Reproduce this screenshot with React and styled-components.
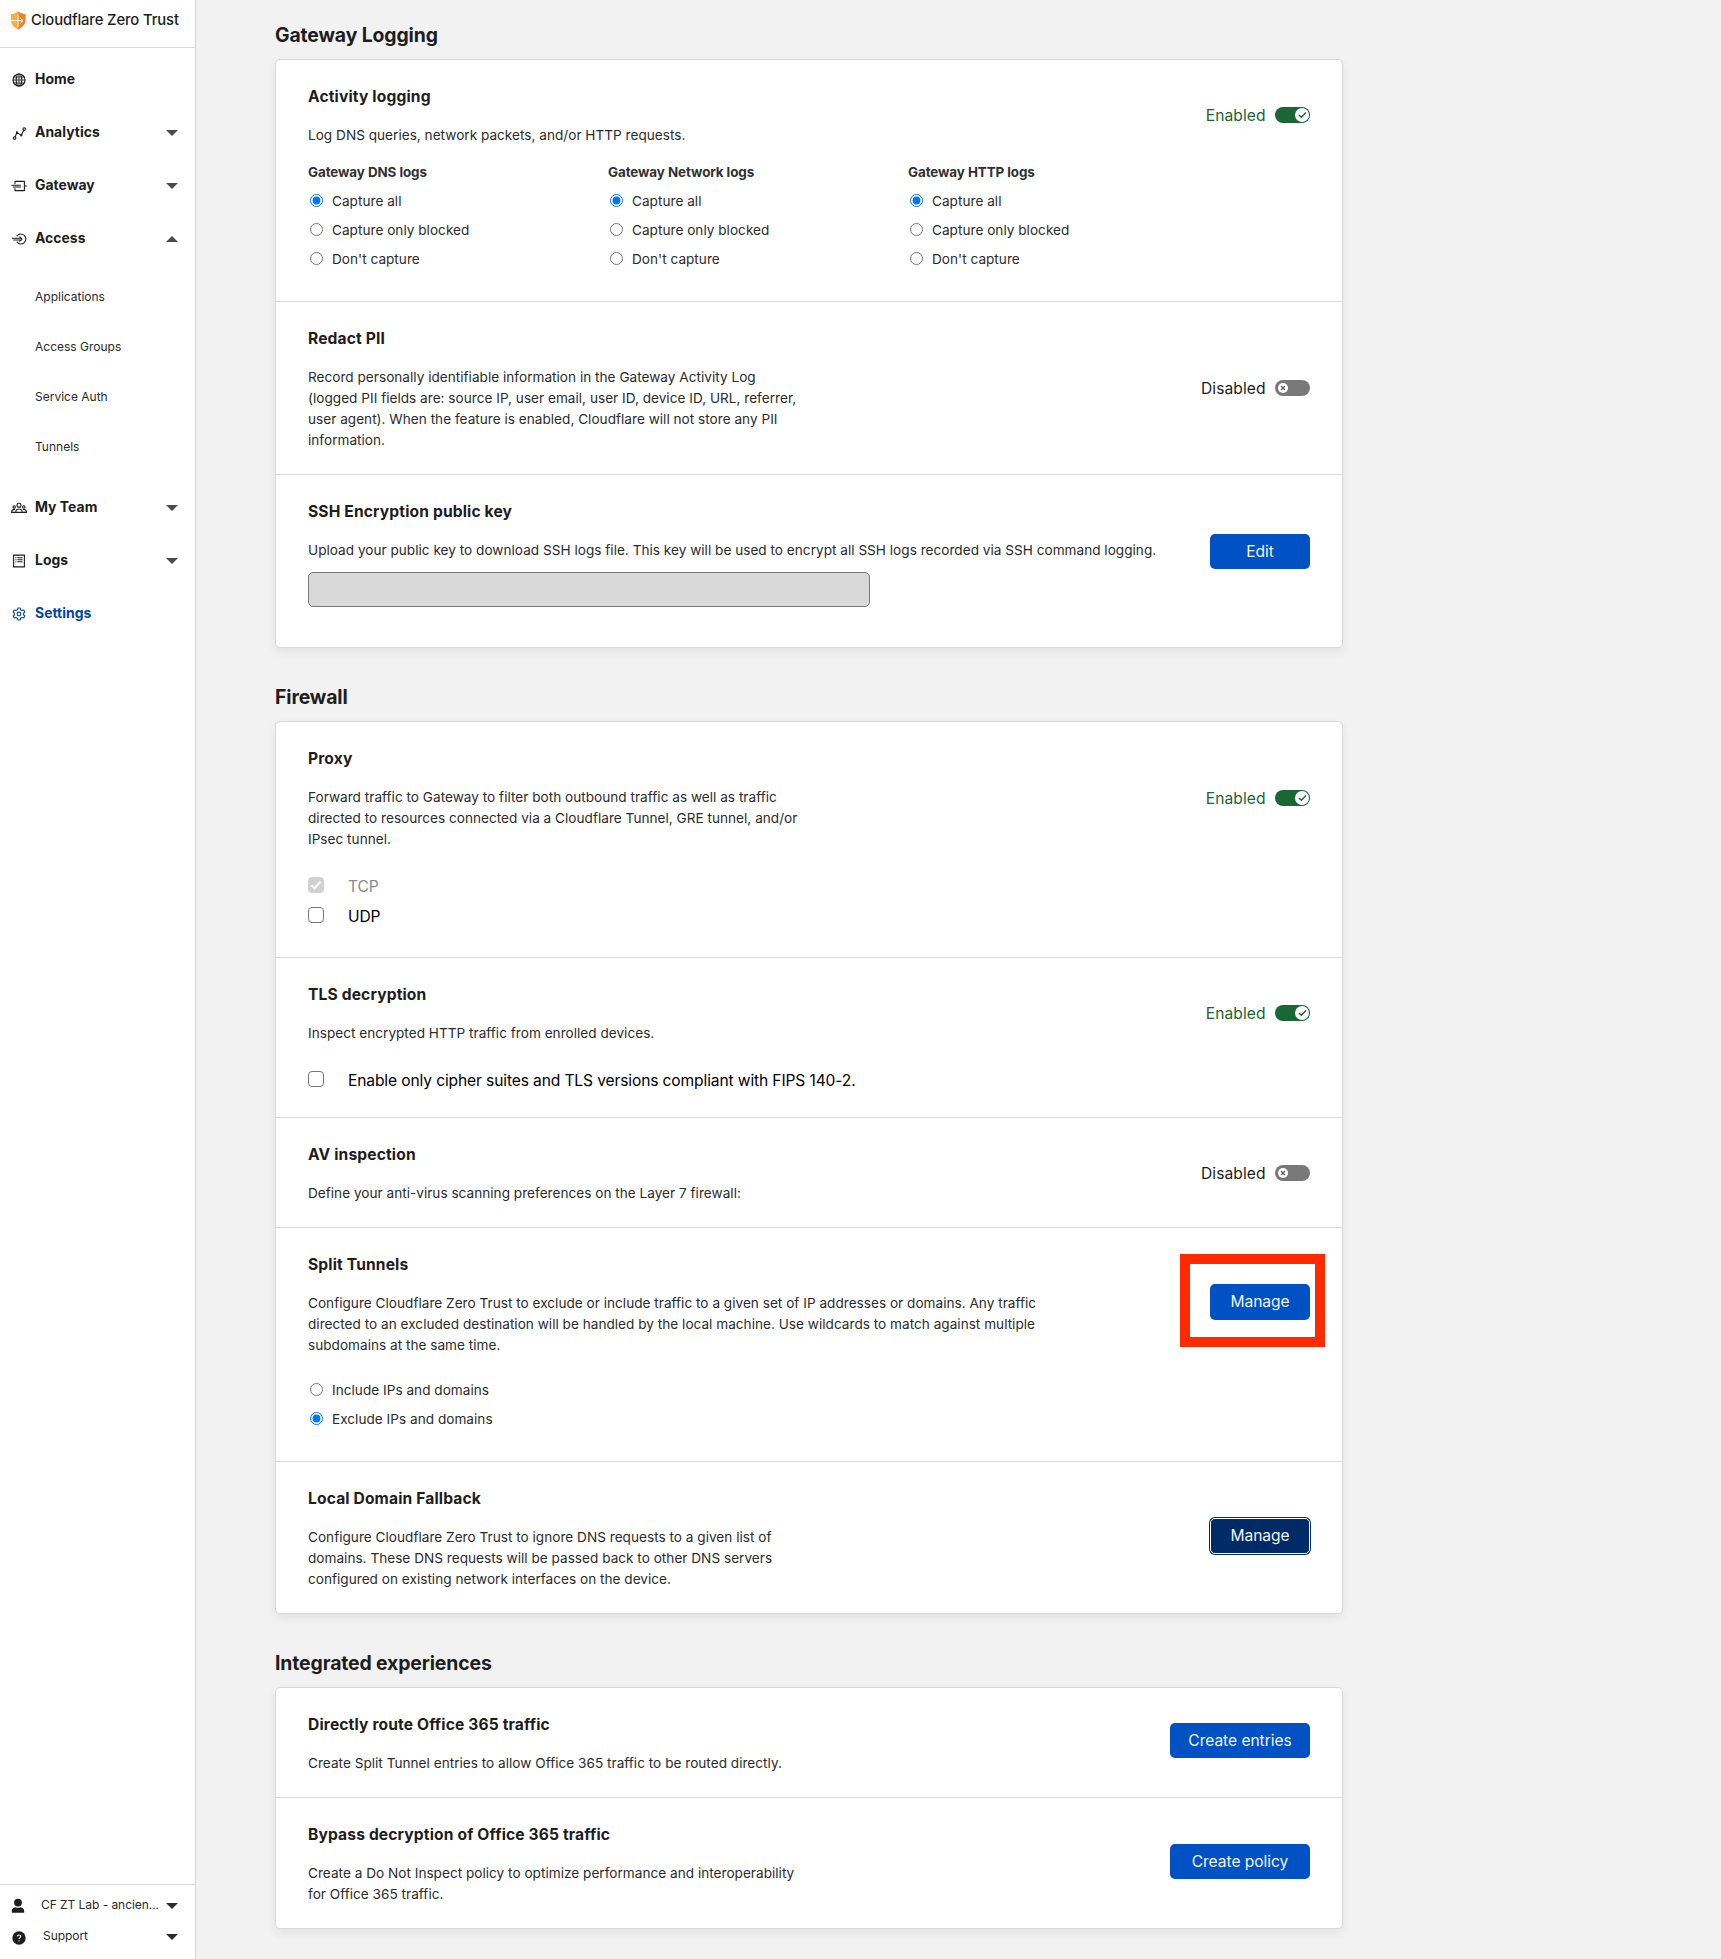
import React from "react";
import styled, { createGlobalStyle, css } from "styled-components";

const GlobalStyle = createGlobalStyle`
  * { box-sizing: border-box; }
  body {
    margin: 0;
    background: #f2f2f2;
    color: #1d1d1d;
    font-family: Inter, "Noto Sans", sans-serif;
    font-size: 13.6px;
  }
  h2, h3, h4, p { margin: 0; }
`;

const Page = styled.div`
  display: flex;
  height: 1959px;
  overflow: hidden;
`;

/* ---------- sidebar ---------- */

const Sidebar = styled.aside`
  display: flex;
  flex-direction: column;
  width: 196px;
  flex: none;
  background: #fff;
  border-right: 1px solid #d5d5d5;
`;

const Brand = styled.div`
  display: flex;
  align-items: center;
  gap: 5px;
  height: 48px;
  padding: 0 0 7px 10px;
  border-bottom: 1px solid #d9d9d9;
  font-size: 14.8px;
  font-weight: 550;
  letter-spacing: -0.12px;
  white-space: nowrap;
`;

const Nav = styled.nav`
  display: flex;
  flex-direction: column;
  flex: 1;
  padding-top: 5px;
`;

const NavItem = styled.div`
  display: flex;
  align-items: center;
  height: 53px;
  padding: 0 17px 0 11px;
  font-size: 13.9px;
  font-weight: 700;
  letter-spacing: 0.04px;
  color: ${(p) => (p.$active ? "#0045a6" : "#1d1d1d")};

  svg:first-child { margin-right: 8px; flex: none; }
`;

const NavLabel = styled.span`
  flex: 1;
  padding-bottom: ${(p) => (p.$raised ? 2 : 0)}px;
`;

const SubNav = styled.div`
  display: flex;
  flex-direction: column;
  padding: 7px 0 9px 35px;
`;

const SubItem = styled.div`
  height: 50px;
  line-height: 50px;
  font-size: 12px;
  color: #2a2a2a;
`;

const SidebarFooter = styled.div`
  height: 75px;
  padding-top: 5px;
  border-top: 1px solid #d9d9d9;
`;

const FooterItem = styled.div`
  display: flex;
  align-items: center;
  height: 31px;
  padding: 0 17px 0 11px;
  font-size: 12px;
  letter-spacing: -0.05px;
  color: #2a2a2a;

  svg:first-child { margin-right: ${(p) => p.$gap}px; flex: none; }
`;

const Caret = styled.span`
  width: 0;
  height: 0;
  flex: none;
  border-left: 6px solid transparent;
  border-right: 6px solid transparent;
  ${(p) =>
    p.$up
      ? css`border-bottom: 6px solid #4a4a4a;`
      : css`border-top: 6px solid ${p.$dark ? "#2d2d2d" : "#4a4a4a"};`}
`;

/* ---------- content ---------- */

const Content = styled.main`
  width: 1068px;
  margin-left: 79px;
  padding-top: 20px;
`;

const Section = styled.section`
  margin-bottom: 34px;
`;

const SectionTitle = styled.h2`
  height: 30px;
  margin-bottom: 9px;
  line-height: 30px;
  font-size: 19.4px;
  font-weight: 700;
  letter-spacing: -0.12px;
`;

const Card = styled.div`
  border: 1px solid #d9d9d9;
  border-radius: 5px;
  background: #fff;
  box-shadow: 0 4px 10px rgba(0, 0, 0, 0.07);
`;

const Row = styled.div`
  position: relative;
  display: flex;
  justify-content: space-between;
  align-items: flex-start;
  box-sizing: content-box;
  height: ${(p) => p.$h - 49}px;
  padding: 25px 32px 24px;

  & + & { border-top: 1px solid #d9d9d9; }
`;

const Body = styled.div`
  display: flex;
  flex-direction: column;
`;

const RowTitle = styled.h3`
  height: 24px;
  margin-bottom: 16px;
  line-height: 24px;
  font-size: 15.6px;
  font-weight: 700;
  letter-spacing: 0.14px;
`;

const Description = styled.p`
  line-height: 21px;
  font-size: 13.6px;
  letter-spacing: 0.015px;
  color: #2b2b2b;
  white-space: pre;
`;

const Columns = styled.div`
  display: grid;
  grid-template-columns: 300px 300px 200px;
  margin-top: 14px;
`;

const ColumnTitle = styled.h4`
  height: 24px;
  margin-bottom: 2px;
  line-height: 24px;
  font-size: 13.4px;
  font-weight: 700;
  letter-spacing: -0.08px;
  color: #313131;
`;

const RadioGroup = styled.div`
  display: flex;
  flex-direction: column;
  margin-top: ${(p) => p.$top || 0}px;
`;

const RadioLabel = styled.label`
  display: flex;
  align-items: center;
  height: 29px;
  font-size: 13.6px;
  letter-spacing: 0.02px;
  color: #2b2b2b;

  input { width: 13px; height: 13px; margin: 0 9px 0 2px; }
`;

const CheckGroup = styled.div`
  display: flex;
  flex-direction: column;
  margin-top: 21px;
`;

const CheckLabel = styled.div`
  display: flex;
  align-items: center;
  height: 30px;
  font-size: 15.6px;
  letter-spacing: -0.13px;
  color: ${(p) => (p.$disabled ? "#8a8a8a" : "#000")};
`;

const Box = styled.span`
  display: flex;
  align-items: center;
  justify-content: center;
  width: 16px;
  height: 16px;
  margin: 0 24px 2px 0;
  border: 1px solid ${(p) => (p.$checked ? "#d1d1d1" : "#767676")};
  border-radius: 4px;
  background: ${(p) => (p.$checked ? "#d1d1d1" : "#fff")};
`;

const KeyField = styled.div`
  width: 562px;
  height: 35px;
  margin-top: 11px;
  border: 1px solid #797979;
  border-radius: 5px;
  background: #d9d9d9;
`;

const Action = styled.div`
  display: flex;
  align-items: center;
  height: ${(p) => p.$h}px;
  margin-top: -25px;
`;

const Status = styled.span`
  margin-right: 9.5px;
  padding-top: 1px;
  font-size: 15.6px;
  letter-spacing: 0.06px;
  color: ${(p) => (p.$on ? "#1a6635" : "#1d1d1d")};
`;

const Track = styled.span`
  display: flex;
  align-items: center;
  justify-content: ${(p) => (p.$on ? "flex-end" : "flex-start")};
  width: 35px;
  height: 16px;
  padding: 0 ${(p) => (p.$on ? 1 : 3)}px;
  border-radius: 8px;
  background: ${(p) => (p.$on ? "#1a6635" : "#797979")};
`;

const Knob = styled.span`
  display: flex;
  align-items: center;
  justify-content: center;
  width: ${(p) => (p.$on ? 14 : 10)}px;
  height: ${(p) => (p.$on ? 14 : 10)}px;
  border-radius: 50%;
  background: #fff;
`;

const Button = styled.button`
  width: ${(p) => (p.$wide ? 140 : 100)}px;
  height: ${(p) => (p.$tall ? 36 : 35)}px;
  margin-bottom: 3.5px;
  padding: 0;
  border: 0;
  border-radius: 5px;
  background: #0051c3;
  color: #f2f5fb;
  font: 400 15.6px Inter, "Noto Sans", sans-serif;
  letter-spacing: -0.05px;

  ${(p) =>
    p.$focused &&
    css`
      background: #002b66;
      border: 1px solid #fff;
      box-shadow: 0 0 0 1px #002b66;
    `}
`;

const Highlight = styled.div`
  position: absolute;
  top: 26px;
  right: 17px;
  width: 145px;
  height: 93px;
  border: 10px solid #ff2a00;
`;

/* ---------- icons ---------- */

const stroke = { fill: "none", stroke: "currentColor", strokeLinecap: "round", strokeLinejoin: "round" };

const ShieldIcon = () => (
  <svg width="16" height="19" viewBox="0 0 16 19">
    <path d="M8 0.3 L8 18.6 C3.5 16.2 1 13 1 9.3 L1 3 C4 3 6 2 8 .3Z" fill="#fbad41" />
    <path d="M8 .3 C10 2 12.5 3 15.5 3 L15.5 9.3 C15.5 13 12.5 16.4 8 18.6Z" fill="#f6821f" />
    <path d="M1 9.6H12.8M10.4 7.2L12.9 9.6L10.4 12M8 3.5V15.6" fill="none" stroke="#fff" strokeWidth="1" />
  </svg>
);

const GlobeIcon = () => (
  <svg width="16" height="16" viewBox="0 0 16 16" {...stroke} strokeWidth="1.1">
    <circle cx="8" cy="8" r="6" />
    <ellipse cx="8" cy="8" rx="2.8" ry="6" />
    <path d="M2 8H14M8 2V14M3 5H13M3 11H13" strokeWidth="0.9" />
  </svg>
);

const AnalyticsIcon = () => (
  <svg width="16" height="16" viewBox="0 0 16 16" {...stroke} strokeWidth="1.1">
    <circle cx="3.6" cy="13" r="1.3" />
    <circle cx="13.2" cy="4" r="1.3" />
    <path d="M4.2 11.8L5.9 7.4L10.3 10.4L12.7 5.3" />
    <circle cx="5.9" cy="7.4" r="0.5" fill="currentColor" />
    <circle cx="10.3" cy="10.4" r="0.5" fill="currentColor" />
  </svg>
);

const GatewayIcon = () => (
  <svg width="16" height="16" viewBox="0 0 16 16" {...stroke} strokeWidth="1.1">
    <path d="M4 5.6V3.4H13.4V12.6H4V10.6" />
    <path d="M.8 7.3H9.4M2.2 9H9.4M13.4 8H15.4" />
  </svg>
);

const AccessIcon = () => (
  <svg width="16" height="16" viewBox="0 0 16 16" {...stroke} strokeWidth="1.1">
    <path d="M6 4.8A5 5 0 1 1 6 11.2" />
    <path d="M1.4 7.3H10.5M2.6 9H10.5M8.8 5.8L11 8L8.8 10.2" />
  </svg>
);

const TeamIcon = () => (
  <svg width="16" height="16" viewBox="0 0 16 16" {...stroke} strokeWidth="1.1">
    <circle cx="8" cy="5.2" r="2" />
    <path d="M4.7 12.4C4.7 7.8 11.3 7.8 11.3 12.4Z" />
    <circle cx="3.2" cy="7" r="1.2" />
    <circle cx="12.8" cy="7" r="1.2" />
    <path d="M4.2 12.4H.6C.6 10.2 1.6 9.4 3.6 9.4M11.8 12.4H15.4C15.4 10.2 14.4 9.4 12.4 9.4" />
  </svg>
);

const LogsIcon = () => (
  <svg width="16" height="16" viewBox="0 0 16 16" {...stroke} strokeWidth="1.1" strokeLinejoin="miter">
    <path d="M2.6 2.1H13.4V13.9H2.6Z" />
    <path d="M4.8 4.8H5M4.8 6.8H5M4.8 8.8H5M6.8 4.8H11.2M6.8 6.8H11.2M6.8 8.8H11.2" />
  </svg>
);

const GearIcon = () => (
  <svg width="16" height="16" viewBox="0 0 16 16" {...stroke} strokeWidth="1.1">
    <path d="M6.8 2H9.2L9.6 3.8L11 4.6L12.7 4L13.9 6L12.6 7.2V8.8L13.9 10L12.7 12L11 11.4L9.6 12.2L9.2 14H6.8L6.4 12.2L5 11.4L3.3 12L2.1 10L3.4 8.8V7.2L2.1 6L3.3 4L5 4.6L6.4 3.8Z" />
    <circle cx="8" cy="8" r="1.9" />
  </svg>
);

const UserIcon = () => (
  <svg width="16" height="16" viewBox="0 0 16 16" fill="#1d1d1d">
    <circle cx="7" cy="4.6" r="3.9" />
    <path d="M.8 14.8V13C.8 10.6 2.4 9.6 4.6 9.2C6 10 8 10 9.4 9.2C11.6 9.6 13.2 10.6 13.2 13V14.8Z" />
  </svg>
);

const HelpIcon = () => (
  <svg width="16" height="16" viewBox="0 0 16 16">
    <circle cx="8" cy="9" r="6.7" fill="#1d1d1d" />
    <path d="M6.3 7.4C6.4 5.4 9.7 5.5 9.7 7.4C9.7 8.7 8 8.6 8 10.1M8 11.6V12.5" fill="none" stroke="#fff" strokeWidth="1.1" />
  </svg>
);

/* ---------- composed parts ---------- */

const Toggle = ({ on }) => (
  <>
    <Status $on={on}>{on ? "Enabled" : "Disabled"}</Status>
    <Track $on={on}>
      <Knob $on={on}>
        {on ? (
          <svg width="9" height="8" viewBox="0 0 9 8" fill="none" stroke="#1a6635" strokeWidth="1.4">
            <path d="M1 4L3.4 6.3L8 1.6" />
          </svg>
        ) : (
          <svg width="6" height="6" viewBox="0 0 6 6" stroke="#555" strokeWidth="1.1">
            <path d="M1 1L5 5M5 1L1 5" />
          </svg>
        )}
      </Knob>
    </Track>
  </>
);

const Setting = ({ h, actionH = h, title, text, action, children, overlay }) => (
  <Row $h={h}>
    <Body>
      <RowTitle>{title}</RowTitle>
      <Description>{text}</Description>
      {children}
    </Body>
    <Action $h={actionH}>{action}</Action>
    {overlay}
  </Row>
);

const Radios = ({ name, options, selected, top }) => (
  <RadioGroup $top={top}>
    {options.map((o, i) => (
      <RadioLabel key={o}>
        <input type="radio" name={name} defaultChecked={i === selected} />
        {o}
      </RadioLabel>
    ))}
  </RadioGroup>
);

const captureOptions = ["Capture all", "Capture only blocked", "Don't capture"];

const NavEntry = ({ icon: Icon, label, caret, active }) => (
  <NavItem $active={active}>
    <Icon />
    <NavLabel $raised>{label}</NavLabel>
    {caret && <Caret $up={caret === "up"} />}
  </NavItem>
);

export default function App() {
  return (
    <>
      <GlobalStyle />
      <Page>
        <Sidebar>
          <Brand>
            <ShieldIcon />
            <NavLabel>Cloudflare Zero Trust</NavLabel>
          </Brand>
          <Nav>
            <NavEntry icon={GlobeIcon} label="Home" />
            <NavEntry icon={AnalyticsIcon} label="Analytics" caret="down" />
            <NavEntry icon={GatewayIcon} label="Gateway" caret="down" />
            <NavEntry icon={AccessIcon} label="Access" caret="up" />
            <SubNav>
              {["Applications", "Access Groups", "Service Auth", "Tunnels"].map((s) => (
                <SubItem key={s}>{s}</SubItem>
              ))}
            </SubNav>
            <NavEntry icon={TeamIcon} label="My Team" caret="down" />
            <NavEntry icon={LogsIcon} label="Logs" caret="down" />
            <NavEntry icon={GearIcon} label="Settings" active />
          </Nav>
          <SidebarFooter>
            <FooterItem $gap={14}>
              <UserIcon />
              <NavLabel $raised>CF ZT Lab - ancien...</NavLabel>
              <Caret $dark />
            </FooterItem>
            <FooterItem $gap={16}>
              <HelpIcon />
              <NavLabel $raised>Support</NavLabel>
              <Caret $dark />
            </FooterItem>
          </SidebarFooter>
        </Sidebar>

        <Content>
          <Section>
            <SectionTitle>Gateway Logging</SectionTitle>
            <Card>
              <Setting
                h={241}
                actionH={109}
                title="Activity logging"
                text="Log DNS queries, network packets, and/or HTTP requests."
                action={<Toggle on />}
              >
                <Columns>
                  {["DNS", "Network", "HTTP"].map((kind) => (
                    <div key={kind}>
                      <ColumnTitle>Gateway {kind} logs</ColumnTitle>
                      <Radios name={kind} options={captureOptions} selected={0} />
                    </div>
                  ))}
                </Columns>
              </Setting>
              <Setting
                h={172}
                title="Redact PII"
                text={
                  "Record personally identifiable information in the Gateway Activity Log\n(logged PII fields are: source IP, user email, user ID, device ID, URL, referrer,\nuser agent). When the feature is enabled, Cloudflare will not store any PII\ninformation."
                }
                action={<Toggle />}
              />
              <Setting
                h={172}
                actionH={157}
                title="SSH Encryption public key"
                text="Upload your public key to download SSH logs file. This key will be used to encrypt all SSH logs recorded via SSH command logging."
                action={<Button>Edit</Button>}
              >
                <KeyField />
              </Setting>
            </Card>
          </Section>

          <Section>
            <SectionTitle>Firewall</SectionTitle>
            <Card>
              <Setting
                h={235}
                actionH={151}
                title="Proxy"
                text={
                  "Forward traffic to Gateway to filter both outbound traffic as well as traffic\ndirected to resources connected via a Cloudflare Tunnel, GRE tunnel, and/or\nIPsec tunnel."
                }
                action={<Toggle on />}
              >
                <CheckGroup>
                  <CheckLabel $disabled>
                    <Box $checked>
                      <svg width="12" height="12" viewBox="0 0 12 12" fill="none" stroke="#fff" strokeWidth="2">
                        <path d="M1.5 6.3L4.6 9.3L10.4 2.6" />
                      </svg>
                    </Box>
                    TCP
                  </CheckLabel>
                  <CheckLabel>
                    <Box />
                    UDP
                  </CheckLabel>
                </CheckGroup>
              </Setting>
              <Setting
                h={159}
                actionH={109}
                title="TLS decryption"
                text="Inspect encrypted HTTP traffic from enrolled devices."
                action={<Toggle on />}
              >
                <CheckGroup>
                  <CheckLabel>
                    <Box />
                    Enable only cipher suites and TLS versions compliant with FIPS 140-2.
                  </CheckLabel>
                </CheckGroup>
              </Setting>
              <Setting
                h={109}
                title="AV inspection"
                text="Define your anti-virus scanning preferences on the Layer 7 firewall:"
                action={<Toggle />}
              />
              <Setting
                h={233}
                actionH={151}
                title="Split Tunnels"
                text={
                  "Configure Cloudflare Zero Trust to exclude or include traffic to a given set of IP addresses or domains. Any traffic\ndirected to an excluded destination will be handled by the local machine. Use wildcards to match against multiple\nsubdomains at the same time."
                }
                action={<Button $tall>Manage</Button>}
                overlay={<Highlight />}
              >
                <Radios
                  name="split"
                  top={19}
                  options={["Include IPs and domains", "Exclude IPs and domains"]}
                  selected={1}
                />
              </Setting>
              <Setting
                h={151}
                title="Local Domain Fallback"
                text={
                  "Configure Cloudflare Zero Trust to ignore DNS requests to a given list of\ndomains. These DNS requests will be passed back to other DNS servers\nconfigured on existing network interfaces on the device."
                }
                action={<Button $tall $focused>Manage</Button>}
              />
            </Card>
          </Section>

          <Section>
            <SectionTitle>Integrated experiences</SectionTitle>
            <Card>
              <Setting
                h={109}
                title="Directly route Office 365 traffic"
                text="Create Split Tunnel entries to allow Office 365 traffic to be routed directly."
                action={<Button $wide>Create entries</Button>}
              />
              <Setting
                h={130}
                title="Bypass decryption of Office 365 traffic"
                text={
                  "Create a Do Not Inspect policy to optimize performance and interoperability\nfor Office 365 traffic."
                }
                action={<Button $wide>Create policy</Button>}
              />
            </Card>
          </Section>
        </Content>
      </Page>
    </>
  );
}
